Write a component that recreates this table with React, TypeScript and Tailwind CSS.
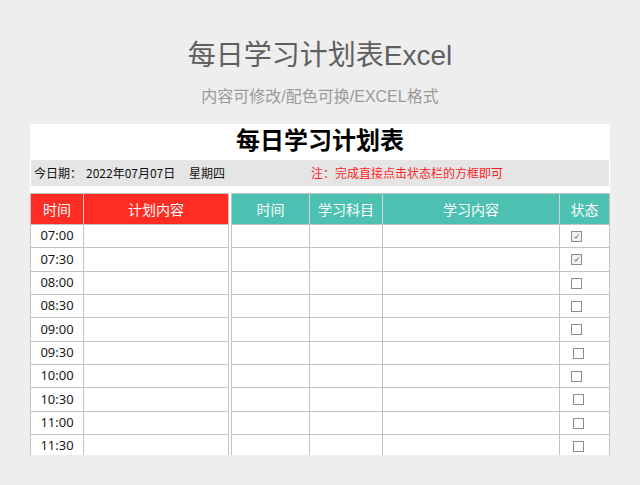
const TIMES = ['07:00', '07:30', '08:00', '08:30', '09:00', '09:30', '10:00', '10:30', '11:00', '11:30']
// row heights incl. bottom border, to follow the sheet's 23.3px grid
const ROW_H = ['h-[23px]', 'h-[24px]', 'h-[23px]', 'h-[23px]', 'h-[24px]', 'h-[23px]', 'h-[23px]', 'h-[24px]', 'h-[23px]', 'h-[23px]']
const BOX_X = ['ml-[11px]', 'ml-[11px]', 'ml-[11px]', 'ml-[11px]', 'ml-[11px]', 'ml-[13px]', 'ml-[11px]', 'ml-[13px]', 'ml-[13px]', 'ml-[13px]']

const cjk = { fontFamily: '"Noto Sans CJK SC", "Noto Sans", sans-serif' }

function CheckBox({ checked }: { checked: boolean }) {
  return (
    <div
      className={
        'w-[11px] h-[11px] border border-[#8c8c8c] flex items-center justify-center ' +
        (checked ? 'bg-[#f1f1f1]' : 'bg-white')
      }
    >
      {checked && (
        <svg width="7" height="7" viewBox="0 0 7 7">
          <path d="M1.5 3.8 L3 5.2 L5.6 1.6" stroke="#555" strokeWidth="0.9" fill="none" />
        </svg>
      )}
    </div>
  )
}

export default function App() {
  return (
    <div className="w-[640px] h-[485px] bg-[#eeeeee] overflow-hidden flex flex-col" style={cjk}>
      {/* Page heading */}
      <div
        className="pt-[37px] text-center text-[28px] leading-[38px] text-[#5f5f5f]"
        style={{ fontFamily: '"Liberation Sans", "Noto Sans CJK SC", sans-serif' }}
      >
        每日学习计划表Excel
      </div>
      <div
        className="mt-[12px] text-center text-[16px] leading-[20px] text-[#9a9a9a]"
        style={{ fontFamily: '"Liberation Sans", "Noto Sans CJK SC", sans-serif' }}
      >
        内容可修改/配色可换/EXCEL格式
      </div>

      {/* Sheet */}
      <div className="mt-[17px] ml-[30px] w-[580px] h-[331px] bg-white flex flex-col">
        <div className="h-[39px] -mt-[3px] text-center text-[24px] leading-[35px] font-bold text-black">每日学习计划表</div>

        <div className="mx-[1px] h-[26px] bg-[#e5e5e5] flex items-center text-[12px] text-[#111]">
          <span className="ml-[3px] w-[52px] shrink-0">今日期：</span>
          <span className="w-[103px] shrink-0">2022年07月07日</span>
          <span className="w-[122px] shrink-0">星期四</span>
          <span className="text-[#ff1f1f]">注：完成直接点击状态栏的方框即可</span>
        </div>

        <div className="mt-[7px] h-[262px] overflow-hidden flex">
          {/* Left table */}
          <div className="border-l border-[#c3c3c3] w-[199px]">
            <div className="flex h-[32px] border-t border-b border-[#c3c3c3] bg-[#fe2c22] text-white text-[14px]">
              <div className="w-[53px] border-r border-[#d4d4d4] flex items-center justify-center">时间</div>
              <div className="w-[145px] border-r border-[#c3c3c3] flex items-center justify-center">计划内容</div>
            </div>
            {TIMES.map((t, i) => (
              <div key={t} className={'flex border-b border-[#c3c3c3] ' + ROW_H[i]}>
                <div
                  className="w-[53px] border-r border-[#c3c3c3] flex items-center justify-center text-[13px] text-[#1a1a1a]"
                  style={{ fontFamily: '"Noto Sans", sans-serif' }}
                >
                  {t}
                </div>
                <div className="w-[145px] border-r border-[#c3c3c3]" />
              </div>
            ))}
          </div>

          <div className="w-[2px] shrink-0" />

          {/* Right table */}
          <div className="border-l border-[#c3c3c3] w-[379px]">
            <div className="flex h-[32px] border-t border-b border-[#c3c3c3] bg-[#4cc0b1] text-white text-[14px]">
              <div className="w-[78px] border-r border-[#d4d4d4] flex items-center justify-center">时间</div>
              <div className="w-[73px] border-r border-[#d4d4d4] flex items-center justify-center">学习科目</div>
              <div className="w-[177px] border-r border-[#d4d4d4] flex items-center justify-center">学习内容</div>
              <div className="w-[50px] border-r border-[#c3c3c3] flex items-center justify-center">状态</div>
            </div>
            {TIMES.map((t, i) => (
              <div key={t} className={'flex border-b border-[#c3c3c3] ' + ROW_H[i]}>
                <div className="w-[78px] border-r border-[#c3c3c3]" />
                <div className="w-[73px] border-r border-[#c3c3c3]" />
                <div className="w-[177px] border-r border-[#c3c3c3]" />
                <div className="w-[50px] border-r border-[#c3c3c3] flex items-center">
                  <div className={BOX_X[i]}>
                    <CheckBox checked={i < 2} />
                  </div>
                </div>
              </div>
            ))}
          </div>
        </div>
      </div>
    </div>
  )
}
